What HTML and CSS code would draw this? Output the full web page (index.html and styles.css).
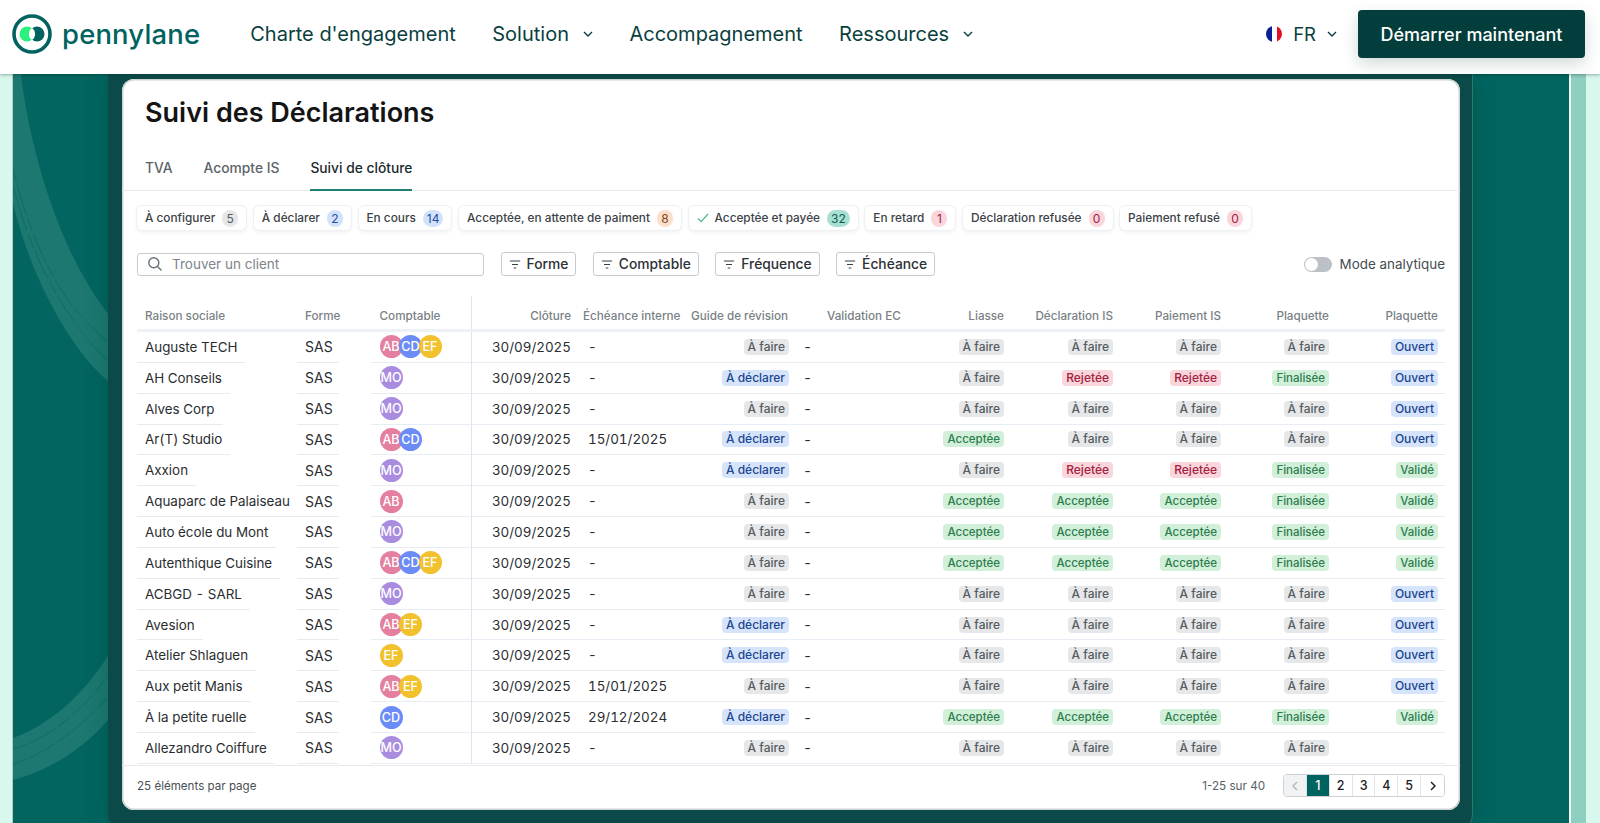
FILE: index.html
```html
<!DOCTYPE html>
<html lang="fr">
<head>
<meta charset="utf-8">
<title>Pennylane - Suivi des Déclarations</title>
<link rel="stylesheet" href="styles.css">
</head>
<body>
<header class="nav">
  <a class="logo">
    <svg class="logo-mark" viewBox="0 0 40 40"><circle cx="20" cy="20" r="18" fill="none" stroke="#00635f" stroke-width="3.6"/><circle cx="15" cy="20" r="7.5" fill="#2bf07c"/><circle cx="25" cy="20" r="7.5" fill="#00635f"/><path d="M20 13.9a7.5 7.5 0 0 1 0 12.2a7.5 7.5 0 0 1 0-12.2z" fill="#fff"/></svg>
    <span class="logo-text">pennylane</span>
  </a>
  <nav class="links">
    <a class="link">Charte d'engagement</a>
    <a class="link">Solution <svg class="chev" viewBox="0 0 10 6"><path d="M1 1l4 4 4-4"/></svg></a>
    <a class="link">Accompagnement</a>
    <a class="link">Ressources <svg class="chev" viewBox="0 0 10 6"><path d="M1 1l4 4 4-4"/></svg></a>
  </nav>
  <div class="nav-right">
    <a class="lang"><span class="flag"><i class="f-b"></i><i class="f-w"></i><i class="f-r"></i></span>FR <svg class="chev" viewBox="0 0 10 6"><path d="M1 1l4 4 4-4"/></svg></a>
    <a class="cta">Démarrer maintenant</a>
  </div>
</header>
<main class="stage">
  <div class="teal">
    <svg class="decor" viewBox="0 0 96 749" preserveAspectRatio="none">
      <path class="band" d="M8 0C16 70 44 175 96 241L96 308C60 278 20 210 0 130L0 0Z"/>
      <path class="band" d="M0 664C24 656 64 632 96 580L96 645C66 680 30 698 0 706Z"/>
      <g class="streak">
        <path d="M0 95C18 170 50 235 96 268"/>
        <path d="M0 112C20 190 56 250 96 288"/>
        <path d="M0 675C32 666 68 640 96 600"/>
        <path d="M0 690C34 680 72 650 96 622"/>
      </g>
    </svg>
    <div class="frame">
      <section class="card">
        <h1 class="title">Suivi des Déclarations</h1>
        <div class="tabs"><a class="tab">TVA</a><a class="tab">Acompte IS</a><a class="tab active">Suivi de clôture</a></div>
        <div class="chips">
          <span class="chip">À configurer <b class="cnt c-grey">5</b></span>
          <span class="chip">À déclarer <b class="cnt c-blue">2</b></span>
          <span class="chip">En cours <b class="cnt c-blue">14</b></span>
          <span class="chip">Acceptée, en attente de paiment <b class="cnt c-orange">8</b></span>
          <span class="chip"><svg class="check" viewBox="0 0 12 10"><path d="M1 5.5l3.2 3.2L11 1"/></svg>Acceptée et payée <b class="cnt c-teal">32</b></span>
          <span class="chip">En retard <b class="cnt c-red">1</b></span>
          <span class="chip">Déclaration refusée <b class="cnt c-red">0</b></span>
          <span class="chip">Paiement refusé <b class="cnt c-red">0</b></span>
        </div>
        <div class="tools">
          <label class="search"><svg class="ico" viewBox="0 0 16 16"><circle cx="6.8" cy="6.8" r="5"/><path d="M10.5 10.5l4 4"/></svg><span>Trouver un client</span></label>
          <button class="fbtn"><svg class="ico-f" viewBox="0 0 14 10"><path d="M1 1h12M3.5 5h7M5.5 9h3"/></svg>Forme</button>
          <button class="fbtn"><svg class="ico-f" viewBox="0 0 14 10"><path d="M1 1h12M3.5 5h7M5.5 9h3"/></svg>Comptable</button>
          <button class="fbtn"><svg class="ico-f" viewBox="0 0 14 10"><path d="M1 1h12M3.5 5h7M5.5 9h3"/></svg>Fréquence</button>
          <button class="fbtn"><svg class="ico-f" viewBox="0 0 14 10"><path d="M1 1h12M3.5 5h7M5.5 9h3"/></svg>Échéance</button>
          <div class="mode"><span class="toggle"><i></i></span>Mode analytique</div>
        </div>
        <div class="table" id="table">
          <div class="row head">
            <div class="cell"><span>Raison sociale</span></div>
            <div class="cell"><span>Forme</span></div>
            <div class="cell sep"><span>Comptable</span></div>
            <div class="cell r pr"><span>Clôture</span></div>
            <div class="cell"><span>Échéance interne</span></div>
            <div class="cell"><span>Guide de révision</span></div>
            <div class="cell val"><span>Validation EC</span></div>
            <div class="cell r"><span>Liasse</span></div>
            <div class="cell r"><span>Déclaration IS</span></div>
            <div class="cell r"><span>Paiement IS</span></div>
            <div class="cell r"><span>Plaquette</span></div>
            <div class="cell r"><span>Plaquette</span></div>
          </div>
        </div>
        <footer class="foot">
          <span class="per">25 éléments par page</span>
          <div class="pager-wrap">
            <span class="range">1-25 sur 40</span>
            <div class="pager">
              <a class="pg off"><svg class="pchev" viewBox="0 0 6 10"><path d="M5 1L1 5l4 4"/></svg></a>
              <a class="pg on">1</a><a class="pg">2</a><a class="pg">3</a><a class="pg">4</a><a class="pg">5</a>
              <a class="pg"><svg class="pchev" viewBox="0 0 6 10"><path d="M1 1l4 4-4 4"/></svg></a>
            </div>
          </div>
        </footer>
      </section>
    </div>
  </div>
</main>
<script src="app.js"></script>
</body>
</html>
```

FILE: app.js
```js
var F='À faire',D='À déclarer',R='Rejetée',A='Acceptée',N='Finalisée',O='Ouvert',V='Validé';
var cls={};cls[F]='b-grey';cls[D]='b-blue';cls[R]='b-red';cls[A]='b-green';cls[N]='b-green';cls[O]='b-blue';cls[V]='b-green';
var rows=[
['Auguste TECH',['AB','CD','EF'],'-',F,[F,F,F,F,O]],
['AH Conseils',['MO'],'-',D,[F,R,R,N,O]],
['Alves Corp',['MO'],'-',F,[F,F,F,F,O]],
['Ar(T) Studio',['AB','CD'],'15/01/2025',D,[A,F,F,F,O]],
['Axxion',['MO'],'-',D,[F,R,R,N,V]],
['Aquaparc de Palaiseau',['AB'],'-',F,[A,A,A,N,V]],
['Auto école du Mont',['MO'],'-',F,[A,A,A,N,V]],
['Autenthique Cuisine',['AB','CD','EF'],'-',F,[A,A,A,N,V]],
['ACBGD - SARL',['MO'],'-',F,[F,F,F,F,O]],
['Avesion',['AB','EF'],'-',D,[F,F,F,F,O]],
['Atelier Shlaguen',['EF'],'-',D,[F,F,F,F,O]],
['Aux petit Manis',['AB','EF'],'15/01/2025',F,[F,F,F,F,O]],
['À la petite ruelle',['CD'],'29/12/2024',D,[A,A,A,N,V]],
['Allezandro Coiffure',['MO'],'-',F,[F,F,F,F,'']]
];
function badge(t){return t?'<span class="badge '+cls[t]+'">'+t+'</span>':'';}
var html='';
rows.forEach(function(r){
  html+='<div class="row body">'+
  '<div class="cell name"><span class="under">'+r[0]+'</span></div>'+
  '<div class="cell forme"><span class="under">SAS</span></div>'+
  '<div class="cell sep line"><span class="avs">'+r[1].map(function(a){return '<i class="av av-'+a+'">'+a+'</i>';}).join('')+'</span></div>'+
  '<div class="cell r pr line date">30/09/2025</div>'+
  '<div class="cell line due date">'+r[2]+'</div>'+
  '<div class="cell r pr2 line">'+badge(r[3])+'</div>'+
  '<div class="cell line dash">-</div>'+
  r[4].map(function(b){return '<div class="cell r line">'+badge(b)+'</div>';}).join('')+
  '</div>';
});
document.getElementById('table').insertAdjacentHTML('beforeend',html);
```

FILE: styles.css
```css
* { box-sizing: border-box; }
html, body { margin: 0; height: 823px; overflow: hidden; }
body { font-family: Inter, "Liberation Sans", sans-serif; background: #d8f8ee; color: #222; display: flex; flex-direction: column; }

.nav { height: 74px; flex: none; background: #fff; display: flex; align-items: center; padding: 0 15px 6px 12px; position: relative; z-index: 2; box-shadow: 0 1px 3px rgba(0,40,40,.35); color: #0a3f3e; }
.logo { display: flex; align-items: center; gap: 10px; margin-right: 50px; }
.logo-mark { width: 40px; height: 40px; }
.logo-text { font-size: 27.4px; font-weight: 500; color: #00635f; letter-spacing: .2px; }
.links { display: flex; gap: 36.5px; align-items: center; }
.link { font-size: 20px; display: flex; align-items: center; gap: 14px; white-space: nowrap; }
.chev { width: 10px; height: 6px; fill: none; stroke: #0a3f3e; stroke-width: 1.4; }
.nav-right { margin-left: auto; display: flex; align-items: center; gap: 21px; }
.lang { display: flex; align-items: center; font-size: 18.5px; gap: 11px; }
.flag { width: 16px; height: 16px; border-radius: 50%; overflow: hidden; display: flex; }
.flag i { flex: 1; }
.f-b { background: #0a1f96; } .f-w { background: #fff; } .f-r { background: #e3102a; }
.cta { width: 227px; height: 48px; border-radius: 4px; background: #033d3c; color: #fff; font-size: 18px; font-weight: 500; display: flex; align-items: center; justify-content: center; box-shadow: 0 6px 16px rgba(0,50,50,.18); }

.stage { flex: 1; min-height: 0; padding: 0 31px 0 12.5px; display: flex; }
.teal { flex: 1; position: relative; background: #02655f; display: flex; justify-content: center; padding: 0 96px 0 95.5px; box-shadow: 2px 0 0 #eef9f6, 17px 0 0 #8fcfc0, -1px 0 0 #b9c9c5; }
.decor { position: absolute; left: 0; top: 0; width: 96px; height: 749px; }
.band { fill: #1c7871; }
.streak { fill: none; stroke: #02655f; stroke-width: .8; stroke-dasharray: 14 3 30 4; stroke-opacity: .7; }
.frame { position: relative; flex: 1; height: 760px; background: #0b4a48; border-radius: 0 0 20px 20px; padding: 5px 13px 0 14px; box-shadow: inset -1px 0 0 #2a7a70, 0 0 24px rgba(0,50,50,.22); }
.card { height: 731px; background: #fff; border-radius: 12px; box-shadow: inset 0 0 0 1.5px #cfd3d4; display: flex; flex-direction: column; }

.title { margin: 0; padding: 15px 0 0 23px; font-size: 27px; line-height: 38px; font-weight: 600; color: #141414; }
.tabs { margin-top: 21px; height: 38px; display: flex; gap: 31px; padding-left: 23px; border-bottom: 1px solid #e6e8ea; }
.tab { font-size: 13.8px; font-weight: 500; color: #5d6469; line-height: 30px; }
.tab.active { color: #1b2a2c; border-bottom: 2px solid #1f7f75; height: 38px; }

.chips { display: flex; gap: 7.6px; padding: 15px 0 0 15px; }
.chip { height: 24px; display: flex; align-items: center; gap: 7px; padding: 0 8px; background: #fff; border-radius: 5px; font-size: 11.8px; font-weight: 500; color: #3b4247; box-shadow: 0 0 0 1px #eef0f1, 0 2px 5px rgba(0,0,0,.07); white-space: nowrap; }
.check { width: 12px; height: 10px; fill: none; stroke: #55b48a; stroke-width: 1.2; margin-right: -1px; }
.cnt { min-width: 16px; height: 17px; padding: 0 4px; border-radius: 9px; display: flex; align-items: center; justify-content: center; font-size: 12px; font-weight: 400; }
.c-grey { background: #e6e7e8; color: #555b60; }
.c-blue { background: #d3e2fb; color: #24509f; }
.c-orange { background: #fbdfca; color: #7c4a20; }
.c-teal { background: #a9e0d3; color: #0c5d55; }
.c-red { background: #f9d5dc; color: #a3213f; }

.tools { display: flex; align-items: center; gap: 16.5px; margin-top: 22.5px; padding: 0 15px; height: 23px; }
.search { width: 347px; height: 23px; border: 1px solid #c6ccd2; border-radius: 3px; display: flex; align-items: center; gap: 9px; padding-left: 9px; font-size: 13.5px; color: #7d848a; }
.ico { width: 16px; height: 16px; fill: none; stroke: #6b7278; stroke-width: 1.4; }
.fbtn { height: 24px; border: 1px solid #c6ccd2; border-radius: 3px; background: #fff; font: 500 13.8px Inter, "Liberation Sans", sans-serif; color: #2b3135; display: flex; align-items: center; gap: 6px; padding: 0 7px; }
.ico-f { width: 12px; height: 9px; fill: none; stroke: #3a4045; stroke-width: 1.2; }
.mode { margin-left: auto; display: flex; align-items: center; gap: 8px; font-size: 13.4px; color: #454c51; }
.toggle { width: 28px; height: 15px; border-radius: 8px; background: #bcc1c7; display: block; padding: 1px; }
.toggle i { display: block; width: 13px; height: 13px; border-radius: 50%; background: #fff; }

.table { margin: 20.5px 0 0 15px; width: 1308px; flex: none; }
.row { display: grid; grid-template-columns: 160px 74px 101px 111px 108px 106px 114px 93px 109px 108px 108px 116px; }
.row.head { height: 36px; font-size: 11.7px; font-weight: 500; color: #797f85; }
.row.body { height: 30.85px; font-size: 14px; color: #2a2d30; font-variant-numeric: tabular-nums; }
.cell { display: flex; align-items: center; white-space: nowrap; }
.cell:last-child { padding-right: 7px; }
.head .cell { padding-top: 7px; border-bottom: 3px solid #eef1f6; }
.head .cell:nth-child(-n+3) { padding-left: 8px; }
.head .cell.sep { padding-left: 8.5px; }
.cell.r { justify-content: flex-end; }
.cell.pr { padding-right: 12px; }
.cell.pr2 { padding-right: 8px; }
.cell.val { padding-left: 30px; }
.cell.sep { border-right: 1px solid #e2e4e8; }
.cell.line { border-bottom: 1px solid #e7edf5; }
.cell.dash { padding-left: 6px; }
.cell.due { padding-left: 5px; }
.date { font-size: 13.4px; }
.name, .forme { align-items: stretch; }
.name { font-size: 13.4px; }
.under { display: flex; align-items: center; padding: 0 8px; border-bottom: 1px solid #e8eaec; }
.forme .under { width: 42px; }
.cell.sep.line { padding-left: 8.5px; }
.avs { display: flex; }
.av { width: 23px; height: 23px; border-radius: 50%; color: #fff; font-style: normal; font-size: 12.6px; font-weight: 500; display: flex; align-items: center; justify-content: center; margin-right: -3.5px; position: relative; flex: none; }
.av-AB { background: #e57f9f; }
.av-CD { background: #6b8cf7; }
.av-EF { background: #f2c12e; }
.av-MO { background: #a98be0; }
.badge { height: 16px; line-height: 16px; padding: 0 4px; border-radius: 4px; font-size: 12px; font-weight: 500; }
.b-grey { background: #e6e7e8; color: #555b60; }
.b-blue { background: #d6e4fb; color: #20458f; }
.b-red { background: #f9d5dc; color: #a3213f; }
.b-green { background: #d1efd9; color: #2c7d4d; font-size: 11.5px; }

.foot { flex: 1; border-top: 1px solid #e8eaec; margin-top: 1px; display: flex; align-items: center; justify-content: space-between; padding: 0 15px 4px; }
.per { font-size: 11.6px; color: #4a5055; }
.pager-wrap { display: flex; align-items: center; gap: 18px; }
.range { font-size: 11.7px; color: #5a6065; }
.pager { display: flex; border: 1px solid #ced2d6; border-radius: 4px; overflow: hidden; height: 23px; }
.pg { width: 22.85px; display: flex; align-items: center; justify-content: center; font-size: 12.5px; font-weight: 500; color: #222; border-right: 1px solid #e1e3e6; background: #fff; }
.pg:last-child { border-right: 0; }
.pg.off { background: #f1f2f3; }
.pg.on { background: #00635f; color: #fff; }
.pchev { width: 6px; height: 10px; fill: none; stroke: #222; stroke-width: 1.5; }
.off .pchev { stroke: #b5babe; }
```
